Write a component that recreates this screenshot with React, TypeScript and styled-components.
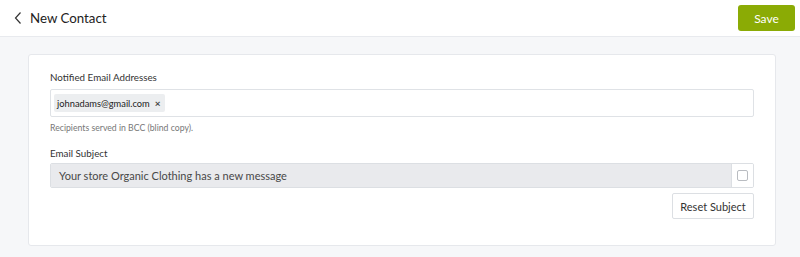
import * as React from "react";
import styled, {createGlobalStyle} from "styled-components";

const GlobalStyle = createGlobalStyle`
  html, body {
    margin: 0;
    padding: 0;
    background: #f6f7f9;
    font-family: Lato, "Open Sans", Arial, sans-serif;
    color: #333;
  }
`

const Header = styled.header`
  height: 36px;
  display: flex;
  align-items: center;
  justify-content: space-between;
  background: #ffffff;
  border-bottom: 1px solid #e8eaee;
  padding: 0 5px 0 14px;
`

const TitleGroup = styled.div`
  display: flex;
  align-items: center;
  gap: 7px;
`

const Title = styled.h1`
  margin: 0;
  font-size: 13.3px;
  font-weight: 400;
  color: #222;
`

const SaveButton = styled.button`
  width: 57px;
  height: 26px;
  border: none;
  border-radius: 3px;
  background: #8bab05;
  color: #fff;
  font-family: inherit;
  font-size: 12px;
  cursor: pointer;
`

const Main = styled.main`
  padding: 17px 24px 0 28px;
`

const Card = styled.section`
  background: #fff;
  border: 1px solid #e6e8ec;
  border-radius: 3px;
  height: 192px;
  box-sizing: border-box;
  padding: 16px 21px 0 21px;
  display: flex;
  flex-direction: column;
`

const Label = styled.label`
  font-size: 9.8px;
  line-height: 12px;
  color: #333;
  margin-bottom: ${(p: {gap: number}) => p.gap}px;
`

const TagInput = styled.div`
  height: 28px;
  box-sizing: border-box;
  border: 1px solid #dfe2e6;
  border-radius: 2px;
  display: flex;
  align-items: center;
  padding: 0 3px;
`

const Tag = styled.span`
  display: inline-flex;
  align-items: center;
  gap: 5px;
  height: 18px;
  padding: 0 4px 0 3px;
  background: #eceef0;
  border-radius: 2px;
  font-size: 9.3px;
  color: #222;
`

const Remove = styled.span`
  font-size: 10px;
  font-weight: 700;
  color: #444;
`

const Help = styled.p`
  margin: 5px 0 14px;
  font-size: 8.7px;
  line-height: 11px;
  color: #777;
`

const SubjectRow = styled.div`
  display: flex;
  height: 25px;
  box-sizing: border-box;
  border: 1px solid #dcdfe3;
  border-radius: 2px;
  overflow: hidden;
`

const SubjectText = styled.div`
  flex: 1;
  background: #e9eaed;
  display: flex;
  align-items: center;
  padding-left: 8px;
  font-size: 11px;
  color: #484848;
  border-right: 1px solid #dcdfe3;
`

const CheckCell = styled.div`
  width: 21px;
  display: flex;
  align-items: center;
  justify-content: center;
  background: #fff;
`

const Box = styled.span`
  width: 9px;
  height: 9px;
  border: 1px solid #b9bcc1;
  border-radius: 2px;
`

const Actions = styled.div`
  display: flex;
  justify-content: flex-end;
  margin-top: 5px;
`

const ResetButton = styled.button`
  width: 82px;
  height: 26px;
  background: #fff;
  border: 1px solid #dcdfe3;
  border-radius: 2px;
  font-family: inherit;
  font-size: 11px;
  color: #333;
`

const App = () => (
    <>
        <GlobalStyle/>
        <Header>
            <TitleGroup>
                <svg width="9" height="14" viewBox="0 0 9 14">
                    <path d="M6.5 1.5 L1.5 7 L6.5 12.5" fill="none" stroke="#333" strokeWidth="1.2"/>
                </svg>
                <Title>New Contact</Title>
            </TitleGroup>
            <SaveButton>Save</SaveButton>
        </Header>
        <Main>
            <Card>
                <Label gap={6}>Notified Email Addresses</Label>
                <TagInput>
                    <Tag>johnadams@gmail.com <Remove>×</Remove></Tag>
                </TagInput>
                <Help>Recipients served in BCC (blind copy).</Help>
                <Label gap={4}>Email Subject</Label>
                <SubjectRow>
                    <SubjectText>Your store Organic Clothing has a new message</SubjectText>
                    <CheckCell><Box/></CheckCell>
                </SubjectRow>
                <Actions>
                    <ResetButton>Reset Subject</ResetButton>
                </Actions>
            </Card>
        </Main>
    </>
);

export default App;
